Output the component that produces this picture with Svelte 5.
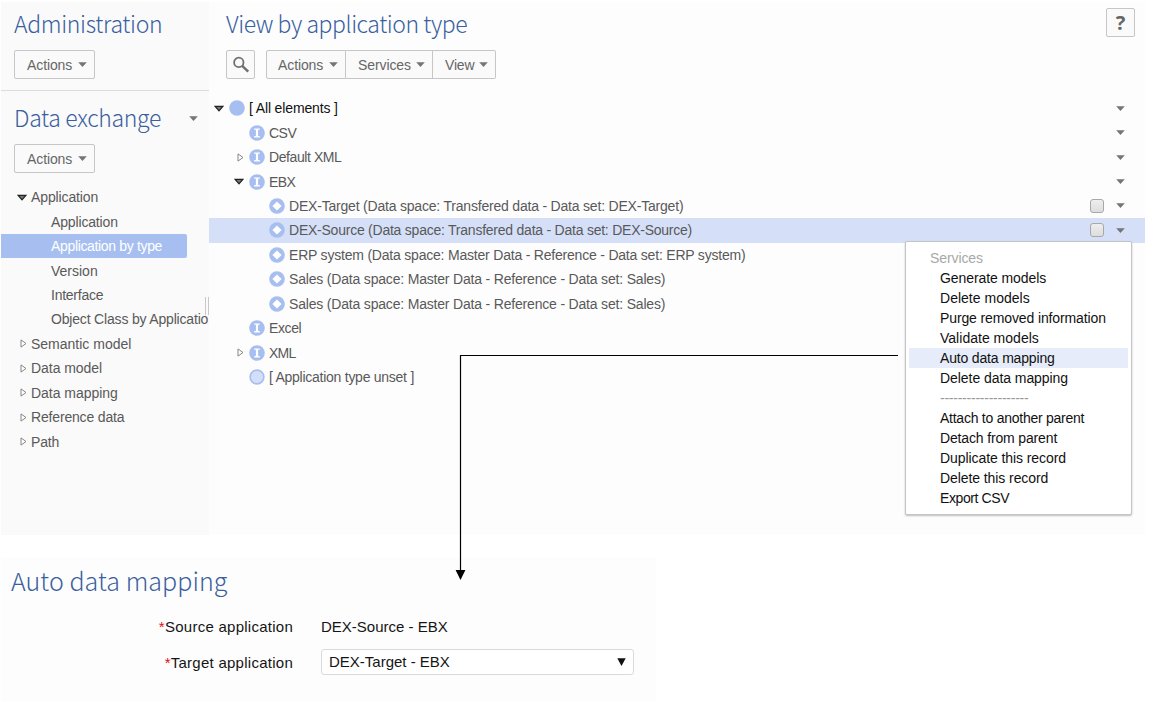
<script>
  const nav = [
    { label: 'Application', level: 0, state: 'open', spacing: -0.12 },
    { label: 'Application', level: 1, spacing: -0.15 },
    { label: 'Application by type', level: 1, selected: true, spacing: -0.34 },
    { label: 'Version', level: 1, spacing: 0 },
    { label: 'Interface', level: 1, spacing: -0.25 },
    { label: 'Object Class by Applicatio', level: 1, spacing: -0.18 },
    { label: 'Semantic model', level: 0, state: 'closed', spacing: 0 },
    { label: 'Data model', level: 0, state: 'closed', spacing: -0.05 },
    { label: 'Data mapping', level: 0, state: 'closed', spacing: -0.03 },
    { label: 'Reference data', level: 0, state: 'closed', spacing: -0.17 },
    { label: 'Path', level: 0, state: 'closed', spacing: -0.15 }
  ];

  const rows = [
    { label: '[ All elements ]', level: 0, icon: 'root', state: 'open', menu: true, spacing: -0.14 },
    { label: 'CSV', level: 1, icon: 'type', menu: true, spacing: -0.5 },
    { label: 'Default XML', level: 1, icon: 'type', state: 'closed', menu: true, spacing: -0.42 },
    { label: 'EBX', level: 1, icon: 'type', state: 'open', menu: true, spacing: -0.6 },
    { label: 'DEX-Target (Data space: Transfered data - Data set: DEX-Target)', level: 2, icon: 'record', check: true, menu: true, spacing: -0.2 },
    { label: 'DEX-Source (Data space: Transfered data - Data set: DEX-Source)', level: 2, icon: 'record', check: true, menu: true, selected: true, spacing: -0.235 },
    { label: 'ERP system (Data space: Master Data - Reference - Data set: ERP system)', level: 2, icon: 'record', spacing: -0.205 },
    { label: 'Sales (Data space: Master Data - Reference - Data set: Sales)', level: 2, icon: 'record', spacing: -0.185 },
    { label: 'Sales (Data space: Master Data - Reference - Data set: Sales)', level: 2, icon: 'record', spacing: -0.185 },
    { label: 'Excel', level: 1, icon: 'type', spacing: -0.4 },
    { label: 'XML', level: 1, icon: 'type', state: 'closed', spacing: -0.8 },
    { label: '[ Application type unset ]', level: 1, icon: 'unset', spacing: -0.26 }
  ];

  const services = [
    { label: 'Generate models', spacing: -0.08 },
    { label: 'Delete models', spacing: 0.02 },
    { label: 'Purge removed information', spacing: -0.12 },
    { label: 'Validate models', spacing: 0.02 },
    { label: 'Auto data mapping', spacing: -0.17, hover: true },
    { label: 'Delete data mapping', spacing: -0.06 },
    { label: '--------------------', spacing: -0.24, divider: true },
    { label: 'Attach to another parent', spacing: -0.25 },
    { label: 'Detach from parent', spacing: -0.15 },
    { label: 'Duplicate this record', spacing: -0.08 },
    { label: 'Delete this record', spacing: -0.08 },
    { label: 'Export CSV', spacing: -0.4 }
  ];
</script>

{#snippet caret()}
  <svg class="caret" width="9" height="5" viewBox="0 0 9 5"><path d="M0.2 0.3H8.8L4.5 4.9Z" fill="#757575" /></svg>
{/snippet}

{#snippet twisty(state)}
  <span class="twisty {state ?? ''}">
    {#if state === 'open'}
      <svg width="10" height="7" viewBox="0 0 10 7"><path d="M1.2 1.3H8.8L5 5.8Z" fill="#777" stroke="#222" stroke-width="1.3" /></svg>
    {:else if state === 'closed'}
      <svg width="7" height="9" viewBox="0 0 7 9"><path d="M1 0.9V8.1L6 4.5Z" fill="#fff" stroke="#858585" /></svg>
    {/if}
  </span>
{/snippet}

{#snippet node(kind)}
  <svg class="node" width="16" height="16" viewBox="0 0 16 16">
    {#if kind === 'unset'}
      <circle cx="8" cy="8" r="6.9" fill="#d3dff8" stroke="#a6bff0" stroke-width="1.6" />
    {:else}
      <circle cx="8" cy="8" r="7.8" fill="#a6bff0" />
      {#if kind === 'type'}
        <path d="M5.2 3.4H10.8V4.8H9.1V11H10.8V12.4H5.2V11H6.9V4.8H5.2Z" fill="#fff" />
      {:else if kind === 'record'}
        <path d="M8 3.4L12.6 8L8 12.6L3.4 8Z" fill="#fff" />
      {/if}
    {/if}
  </svg>
{/snippet}

<div class="page">
  <div class="workspace">
    <aside>
      <section class="admin">
        <h2>Administration</h2>
        <button class="btn">Actions {@render caret()}</button>
      </section>
      <section class="exchange">
        <div class="heading">
          <h2>Data exchange</h2>
          {@render caret()}
        </div>
        <button class="btn">Actions {@render caret()}</button>
        <nav>
          {#each nav as item}
            <div class="nav-row" class:child={item.level === 1} class:selected={item.selected}>
              {#if item.level === 0}{@render twisty(item.state)}{/if}
              <span style="letter-spacing: {item.spacing}px">{item.label}</span>
            </div>
          {/each}
        </nav>
      </section>
      <div class="grip"></div>
    </aside>

    <main>
      <header>
        <h2>View by application type</h2>
        <button class="btn help">?</button>
      </header>
      <div class="toolbar">
        <button class="btn search" aria-label="Search">
          <svg width="18" height="18" viewBox="0 0 18 18" fill="none" stroke="#707070">
            <circle cx="6.8" cy="6.4" r="4.7" stroke-width="1.8" />
            <path d="M10.2 9.8L16.2 15.6" stroke-width="2.5" />
          </svg>
        </button>
        <div class="group">
          <button class="btn actions">Actions {@render caret()}</button>
          <button class="btn services">Services {@render caret()}</button>
          <button class="btn view">View {@render caret()}</button>
        </div>
      </div>
      <div class="tree">
        {#each rows as row}
          <div class="row level{row.level}" class:selected={row.selected}>
            {@render twisty(row.state)}
            {@render node(row.icon)}
            <span class="label" style="letter-spacing: {row.spacing}px">{row.label}</span>
            {#if row.check}<span class="check"></span>{/if}
            {#if row.menu}{@render caret()}{/if}
          </div>
        {/each}
      </div>
    </main>
  </div>

  <section class="mapping">
    <h2>Auto data mapping</h2>
    <div class="field">
      <div class="name"><b>*</b>Source application</div>
      <div class="value">DEX-Source - EBX</div>
    </div>
    <div class="field target">
      <div class="name"><b>*</b>Target application</div>
      <div class="select">
        <span>DEX-Target - EBX</span>
        <svg width="9" height="8" viewBox="0 0 9 8"><path d="M0.3 0.3H8.7L4.5 8Z" fill="#111" /></svg>
      </div>
    </div>
  </section>

  <div class="popup">
    <div class="caption">Services</div>
    {#each services as item}
      <div class="item" class:hover={item.hover} class:divider={item.divider} style="letter-spacing: {item.spacing}px">{item.label}</div>
    {/each}
  </div>

  <svg class="link" width="444" height="226" viewBox="0 0 444 226">
    <path d="M443 1.5H5.5V217" fill="none" stroke="#000" stroke-width="1.2" />
    <path d="M0.6 216H10.4L5.5 226Z" />
  </svg>
</div>

<style>
  :global(body) { background: #fff; }
  .page {
    position: relative;
    width: 1157px;
    height: 702px;
    overflow: hidden;
    font: 14px "Liberation Sans", Arial, sans-serif;
    color: #595959;
  }
  .page * { box-sizing: border-box; }
  svg { display: block; flex: none; }
  h2 {
    margin: 0;
    font: 300 23px/34px "Noto Sans CJK SC", "Open Sans", sans-serif;
    height: 36px;
    letter-spacing: -0.33px;
    color: #3a5f9f;
    white-space: nowrap;
  }
  .workspace { display: flex; height: 535px; padding: 2px 12px 0 1px; }
  aside { position: relative; width: 208px; background: #fafafa; overflow: hidden; }
  main { flex: 1; background: #fdfdfd; }
  .admin { height: 89px; padding: 4px 13px 0; border-bottom: 1px solid #dcdcdc; }
  .exchange { padding-top: 9px; }
  .heading { display: flex; align-items: center; justify-content: space-between; padding: 0 11px 0 13px; }
  .exchange .btn { margin-left: 13px; }
  .btn {
    display: flex;
    align-items: center;
    justify-content: space-between;
    width: 81px;
    height: 29px;
    margin: 8px 0 0;
    padding: 0 7px 0 12px;
    border: 1px solid #c6c6c6;
    border-radius: 2px;
    background: #fafafa;
    color: #666;
    font: 14px "Liberation Sans", Arial, sans-serif;
    letter-spacing: -0.1px;
  }
  nav { margin-top: 12px; }
  .nav-row { display: flex; align-items: center; height: 24.45px; padding-left: 15px; white-space: nowrap; }
  .nav-row.child { padding-left: 50px; }
  .nav-row.selected { width: 186px; background: #a6bff0; color: #fff; border-radius: 0 2px 2px 0; }
  .twisty { flex: none; display: flex; justify-content: center; width: 18px; padding-right: 2px; }
  .nav-row .twisty { width: 15px; padding-right: 4px; }
  .twisty.closed { padding-right: 0; }
  .nav-row .twisty.closed { padding-right: 1px; }
  .grip { position: absolute; left: 204px; top: 295px; width: 4px; height: 18px; border: solid #c8c8c8; border-width: 0 1px; background: #fafafa; }

  header { display: flex; justify-content: space-between; height: 40px; padding: 4px 10px 0 17px; }
  header h2 { letter-spacing: -0.46px; }
  .help { justify-content: center; width: 29px; margin-top: 2px; padding: 0; font: 700 20px "Noto Sans", sans-serif; }
  .toolbar { display: flex; gap: 11px; padding: 8px 0 0 17px; }
  .toolbar .btn { margin: 0; }
  .toolbar .search { width: 29px; padding: 0 0 0 5px; }
  .group { display: flex; }
  .group .btn { border-radius: 0; padding-left: 12px; }
  .group .btn + .btn { border-left: 0; }
  .group .actions { width: 80px; padding-left: 11px; border-radius: 2px 0 0 2px; }
  .group .services { width: 87px; letter-spacing: -0.1px; }
  .group .view { width: 63px; border-radius: 0 2px 2px 0; letter-spacing: -0.2px; }
  .tree { margin-top: 17px; }
  .row { display: flex; align-items: center; height: 24.45px; padding: 0 20px 0 2px; white-space: nowrap; }
  .row.level1 { padding-left: 22px; }
  .row.level2 { padding-left: 42px; }
  .row.selected { background: #d5e0f8; }
  .level0 { color: #111; }
  .label { flex: 1; padding-left: 4px; }
  .check { width: 14px; height: 14px; margin-right: 12px; border: 1px solid #a8a8a8; border-radius: 3px; background: linear-gradient(#eee, #ddd); }

  .mapping { margin: 22px 0 0 1px; padding: 6px 0 0 10px; color: #151515; width: 655px; height: 144px; background: #fdfdfd; }
  .mapping h2 { font-size: 25px; letter-spacing: 0.07px; }
  .mapping .field { display: flex; align-items: center; height: 26px; margin-top: 14px; font-size: 15px; }
  .mapping .target { margin-top: 10px; }
  .name { width: 282px; text-align: right; letter-spacing: 0.26px; }
  .name b { color: #e01010; font-weight: 400; }
  .value { margin-left: 28px; }
  .select { display: flex; align-items: center; justify-content: space-between; width: 313px; height: 26px; margin-left: 28px; padding: 0 7px 1px; border: 1px solid #dadada; border-radius: 3px; background: #fff; }

  .popup {
    position: absolute;
    left: 905px;
    top: 241px;
    width: 227px;
    height: 274px;
    padding: 6px 3px;
    border: 1px solid #c4c4c4;
    border-radius: 2px;
    background: #fff;
    box-shadow: 0 1px 2px rgba(0, 0, 0, 0.25);
    color: #111;
    line-height: 20px;
    white-space: nowrap;
  }
  .caption { padding-left: 21px; color: #a8a8a8; letter-spacing: -0.1px; }
  .item { height: 20px; padding-left: 31px; }
  .hover { background: #e6ecf9; }
  .divider { color: #999; }
  .link { position: absolute; left: 455px; top: 354px; }
</style>
